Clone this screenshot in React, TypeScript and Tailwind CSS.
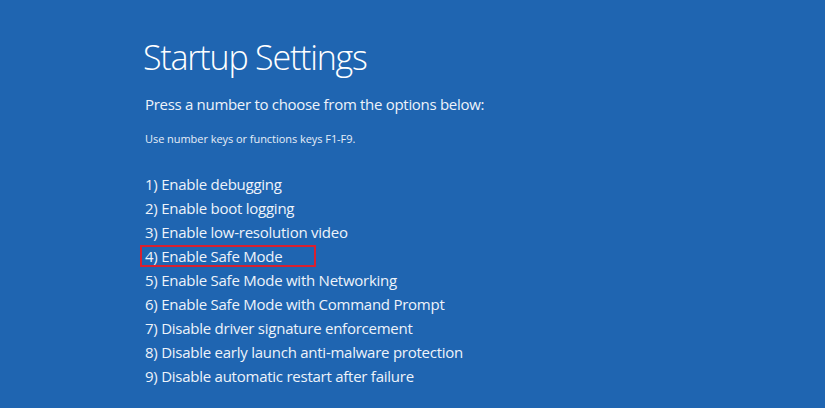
const options = [
  '1) Enable debugging',
  '2) Enable boot logging',
  '3) Enable low-resolution video',
  '4) Enable Safe Mode',
  '5) Enable Safe Mode with Networking',
  '6) Enable Safe Mode with Command Prompt',
  '7) Disable driver signature enforcement',
  '8) Disable early launch anti-malware protection',
  '9) Disable automatic restart after failure',
]

export default function App() {
  return (
    <div className="h-[408px] w-[825px] overflow-hidden bg-[#1f65b1] pl-[143px] pt-[33px] font-['Open_Sans',sans-serif] text-white">
      <h1 className="text-[34px] font-light leading-[48px] tracking-[-1.2px]">Startup Settings</h1>
      <p className="mt-[12px] pl-[2px] text-[15px] leading-[22px] tracking-[-0.3px] text-[#eef3fa]">
        Press a number to choose from the options below:
      </p>
      <p className="mt-[16px] pl-[2px] text-[11px] leading-[16px] tracking-[-0.05px] text-[#e6eef8]">
        Use number keys or functions keys F1-F9.
      </p>
      <ul className="mt-[25px]">
        {options.map((o, i) => (
          <li key={o} className="flex h-[24px] items-center">
            <span
              className={
                i === 3
                  ? 'ml-[-3px] flex h-[22px] w-[176px] items-center border-2 border-[#d9202f] pl-[3px] text-[15px] tracking-[-0.25px] text-[#eef3fa]'
                  : 'pl-[2px] text-[15px] tracking-[-0.25px] text-[#eef3fa]'
              }
            >
              {o}
            </span>
          </li>
        ))}
      </ul>
    </div>
  )
}
